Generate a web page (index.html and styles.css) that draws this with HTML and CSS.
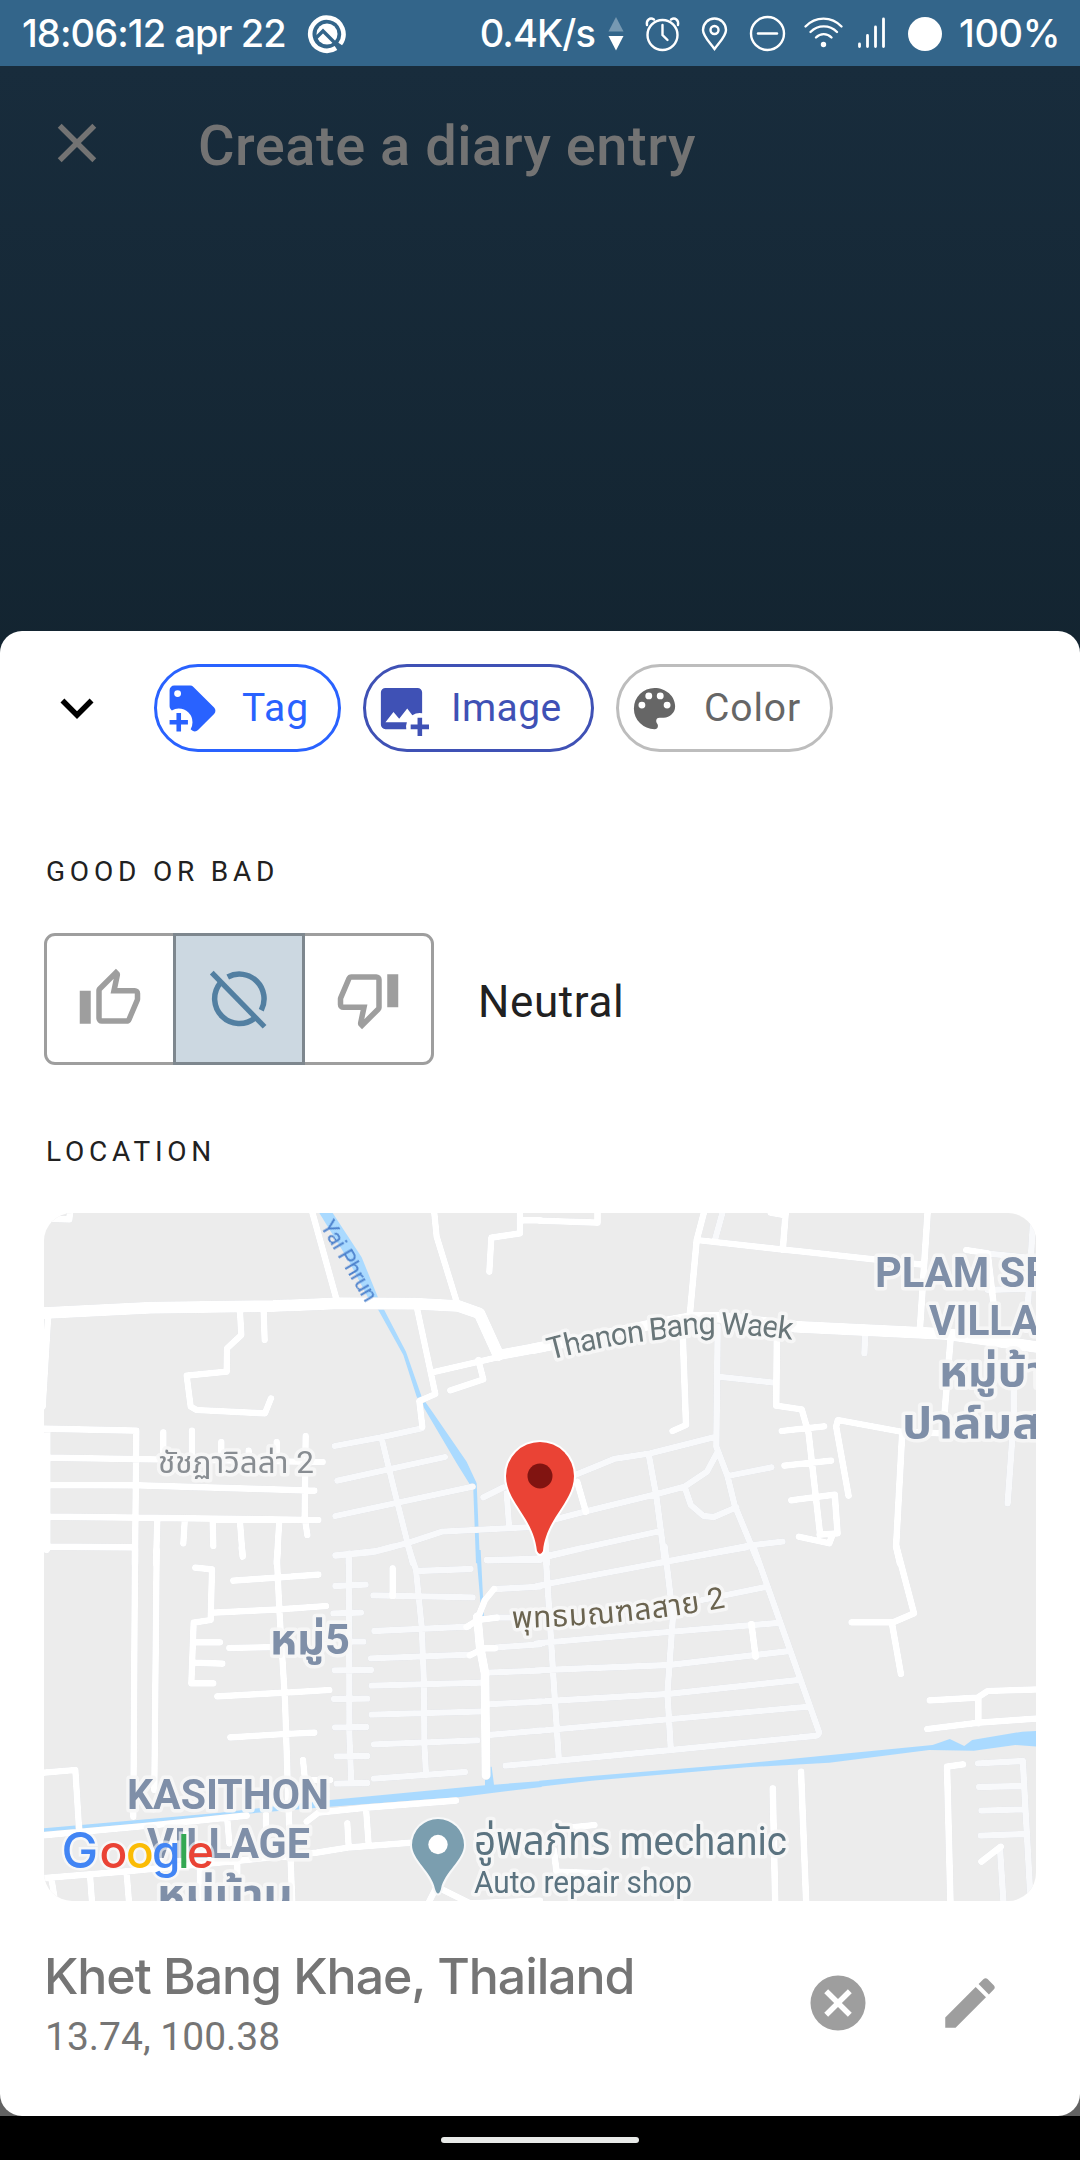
FILE: index.html
```html
<!DOCTYPE html>
<html lang="en">
<head>
<meta charset="utf-8">
<title>Create a diary entry</title>
<link rel="stylesheet" href="styles.css">
</head>
<body>
<div class="screen">
  <div class="statusbar">
    <span class="clock">18:06:12 apr 22</span>
    <svg class="notif" width="40" height="40" viewBox="0 0 40 40" fill="none"><path d="M29 34A16.600 16.600 0 1 1 33.200 30" stroke="#fff" stroke-width="4.600"/><circle cx="20" cy="20" r="10.500" fill="#fff"/><path d="M8 25l8-8 14 14" stroke="#33658a" stroke-width="3.400"/></svg>
    <span class="rate">0.4K/s</span>
    <svg class="sysicons" width="344" height="44" viewBox="604 11 344 44" fill="none" stroke="#fff" stroke-width="2.400" stroke-linecap="round">
      <path d="M617 16l7.500 14.500h-15z" fill="#7799b2" stroke="none"/>
      <path d="M617 49.500l7.500-14.500h-15z" fill="#fff" stroke="none"/>
      <circle cx="663.500" cy="34" r="15"/><path d="M663.500 24v10l5 5M648 24c-1-5 3-8 7-5.500M679 24c1-5-3-8-7-5.500"/>
      <path d="M715.500 48c-6-8-11.500-13-11.500-19a11.500 11.500 0 0 1 23 0c0 6-5.500 11-11.500 19z"/><circle cx="715.500" cy="29" r="4"/>
      <circle cx="768.500" cy="32.500" r="16.500"/><path d="M759 32.500h19"/>
      <path d="M806.500 25.500c10-10.500 26-10.500 36 0M811.500 31c7.500-7.500 19-7.500 26.500 0M817 36.500c4.500-4.500 11-4.500 15.500 0"/><circle cx="824.500" cy="43.500" r="1.500" fill="#fff"/>
      <path d="M860.500 43v2.500M868.500 34.500v11M876.500 26v19.500M884.500 18v27.500" stroke-width="2.800"/>
      <circle cx="926" cy="33" r="17" fill="#fff" stroke="none"/>
    </svg>
    <span class="battery">100%</span>
  </div>

  <div class="backdrop">
    <header class="header">
      <svg class="icon close" viewBox="0 0 24 24"><path d="M19 6.410 17.590 5 12 10.590 6.410 5 5 6.410 10.590 12 5 17.590 6.410 19 12 13.410 17.590 19 19 17.590 13.410 12z"/></svg>
      <h1 class="title">Create a diary entry</h1>
    </header>

    <main class="sheet">
      <div class="toolbar">
        <svg class="icon chevron" viewBox="0 0 24 24"><path d="M7.410 8.580 12 13.170l4.590-4.590L18 10l-6 6-6-6z"/></svg>
        <div class="chips">
          <div class="chip chip-tag"><svg viewBox="0 0 24 24"><path d="M21.410 11.580l-9-9A2 2 0 0 0 11 2H4a2 2 0 0 0-2 2v7a2 2 0 0 0 .590 1.420l.410.400A5.620 5.620 0 0 1 6 12a6 6 0 0 1 6 6 5.620 5.620 0 0 1-.820 3l.400.400A2 2 0 0 0 13 22a2 2 0 0 0 1.410-.590l7-7A2 2 0 0 0 22 13a2 2 0 0 0-.590-1.420M5.500 7A1.500 1.500 0 1 1 7 5.500 1.500 1.500 0 0 1 5.500 7M10 19H7v3H5v-3H2v-2h3v-3h2v3h3z"/></svg><span>Tag</span></div>
          <div class="chip chip-image"><svg viewBox="0 0 24 24"><path d="M5 3a2 2 0 0 0-2 2v14a2 2 0 0 0 2 2h9.090A6 6 0 0 1 14.350 18H5l3.500-4.500 2.500 3 3.500-4.500 2.230 2.970A6 6 0 0 1 21 14.090V5a2 2 0 0 0-2-2zM19 16v3h-3v2h3v3h2v-3h3v-2h-3v-3z"/></svg><span>Image</span></div>
          <div class="chip chip-color"><svg viewBox="0 0 24 24"><path d="M17.500 12A1.500 1.500 0 0 1 16 10.500 1.500 1.500 0 0 1 17.500 9a1.500 1.500 0 0 1 1.500 1.500 1.500 1.500 0 0 1-1.500 1.500m-3-4A1.500 1.500 0 0 1 13 6.500 1.500 1.500 0 0 1 14.500 5 1.500 1.500 0 0 1 16 6.500 1.500 1.500 0 0 1 14.500 8m-5 0A1.500 1.500 0 0 1 8 6.500 1.500 1.500 0 0 1 9.500 5 1.500 1.500 0 0 1 11 6.500 1.500 1.500 0 0 1 9.500 8m-3 4A1.500 1.500 0 0 1 5 10.500 1.500 1.500 0 0 1 6.500 9 1.500 1.500 0 0 1 8 10.500 1.500 1.500 0 0 1 6.500 12M12 3a9 9 0 0 0 0 18 1.500 1.500 0 0 0 1.500-1.500c0-.390-.150-.740-.390-1-.230-.270-.380-.620-.380-1a1.500 1.500 0 0 1 1.500-1.500H16a5 5 0 0 0 5-5c0-4.420-4.030-8-9-8z"/></svg><span>Color</span></div>
        </div>
      </div>

      <h2 class="label">GOOD OR BAD</h2>
      <div class="mood">
        <div class="segments">
          <div class="segment"><svg class="icon" viewBox="0 0 24 24"><path d="M5 9v12H1V9h4m4 12a2 2 0 0 1-2-2V9c0-.550.220-1.050.590-1.410L14.170 1l1.060 1.060c.270.270.440.640.440 1.050l-.030.320L14.690 8H21a2 2 0 0 1 2 2v2c0 .260-.050.500-.140.730l-3.020 7.050A2 2 0 0 1 18 21H9m0-2h9.030L21 12v-2h-8.790l1.130-5.320L9 9.030z"/></svg></div>
          <div class="segment selected"><svg class="icon" viewBox="0 0 24 24" fill="none" stroke="currentColor" stroke-width="2"><path d="M2.100 2.400 21.300 22.100" stroke-width="1.900"/><path d="M7.900 4A9 9 0 0 1 20.100 16.100M5.100 6.300A9 9 0 0 0 17.800 18.900"/></svg></div>
          <div class="segment"><svg class="icon flipped" viewBox="0 0 24 24"><path d="M5 9v12H1V9h4m4 12a2 2 0 0 1-2-2V9c0-.550.220-1.050.590-1.410L14.170 1l1.060 1.060c.270.270.440.640.440 1.050l-.030.320L14.690 8H21a2 2 0 0 1 2 2v2c0 .260-.050.500-.140.730l-3.020 7.050A2 2 0 0 1 18 21H9m0-2h9.030L21 12v-2h-8.790l1.130-5.320L9 9.030z"/></svg></div>
        </div>
        <span class="mood-name">Neutral</span>
      </div>

      <h2 class="label label-location">LOCATION</h2>
      <svg class="map" width="992" height="688" viewBox="0 0 992 688">
        <defs>
          <path id="bangwaek" d="M506 147Q562 132 616 126.500Q650 119 681 121.500Q715 122 753 127.500"/>
          <path id="phuttha" d="M468 415Q580 413 684 394"/>
        </defs>
        <!-- The map is made of four tiles drawn at three times their size -->
        <g class="water">
          <path transform="translate(-4 -13) scale(.33333)" d="M838 39H878L965 172 1015 295H985L925 180zM1012 325H1030L1098 455 1145 590 1180 640 1280 785 1310 850 1320 1090H1308L1300 870 1250 790 1150 620 1130 590 1090 465z"/>
          <path transform="translate(-4 337) scale(.33333)" d="M1308 0H1322L1332 200H1325zM1335 706V650H1355L1362 704 1505 693V711L1362 728 1255 742 870 770 540 798 12 848V835L540 788 870 750z"/>
          <path transform="translate(496 337) scale(.34437 .33333)" d="M-2 692 150 678 600 640 1140 585 1190 567 1232 588 1255 570 1400 545 1442 543V590L1380 585 1260 602 1130 600 840 638 600 652 150 692-2 710z"/>
        </g>
        <g class="streets">
          <g transform="translate(-4 -13) scale(.33333)">
            <path class="lane" d="M884 738 1022 712 1145 685M892 842 1215 771M886 948 1298 860M888 1067 1010 1053 1110 1027 1205 995 1500 980M1024 712 1065 880 1118 1090M926 1065V1090M1330 892 1390 862M1400 880 1407 975M1340 1080H1500"/>
            <path class="road" d="M815 30 890 300M1182 30 1190 110 1250 305M1440 30V100L1354 113 1348 215M1440 61H1500M12 55 88 58 90 38M1130 320 1186 582 1138 603 1147 680M1182 516 1380 470M1315 480 1330 538 1231 571M600 335 604 405 561 445 560 515 440 527 452 620 470 630 675 640 693 595M671 335 674 420M24 355 8 620M12 686 289 692 285 1090M22 690V1040M20 773 460 780 848 786M20 855 300 856 823 872M20 950 285 953 835 960M370 697V770M456 692V770M544 726V780M626 752V780M710 726V780M797 708 794 950 802 1005M20 1040 285 1042M20 1040 0 1055M352 955 348 1090M434 965 430 1030M518 965 520 1038M600 965 608 1070M718 960 710 1090"/>
            <path class="main" d="M0 340 330 323 700 318 900 310 1130 311 1255 318 1318 340 1375 465"/>
            <path class="main second" d="M1375 465 1510 440"/>
          </g>
          <g transform="translate(496 -13) scale(.34437 .33333)">
            <path class="lane" d="M532 30 508 120M1434 30 1412 390M1295 160 1440 175M1300 270 1440 265M516 380 512 740 545 830 565 915 635 1090M516 530 680 548M944 410 942 460M1375 440 1376 650 1358 910M90 830 215 777 320 760 512 710M0 970 130 935 335 883 420 860 485 815 516 755M316 765 338 890 362 1080M420 860 438 915 475 948 505 951 570 922M545 828 672 802M0 1072 350 993M340 1090 610 1036 704 1025M14 990 20 1090"/>
            <path class="road" d="M0 62 167 68V30M478 30 455 120 435 345M455 120 700 148 1110 194M670 38 712 46M714 30 705 150M1126 30 1103 390M1238 150 1300 160 1318 320M414 390 424 675 385 693M688 390 686 617 760 628 780 700 813 1000M702 693 825 679M710 797 845 782M730 901 856 884 864 1000 812 1004M752 1010 840 1030 848 1008M896 887 860 680 865 660 1050 695 1170 700M1192 420 1170 700M1052 695 1034 1040 1045 1090M108 845 133 935"/>
            <path class="main second" d="M-20 446 160 410 330 372 440 352 520 352 610 362"/>
            <path class="main" d="M600 362 740 380 1000 393 1180 402 1450 442"/>
          </g>
          <g transform="translate(-4 337) scale(.33333)">
            <path class="lane" d="M886 16 1000 6 1060-10M927 10 928 550 934 700M1105-10 1128 60 1145 230 1152 400 1153 580 1158 670M1130 63 1292 57M886 108 977 104M880 190 963 188M927 275 970 275M884 361 993 360M882 447 982 446M885 532 979 531M890 619 982 618M890 701 982 699M1000 136 1298 142M1003 243 1285 230M993 325 1290 314M995 407 1335 398M995 494 1335 484M1002 583 1312 571M1002 686 1275 666M1345 31 1500 25M1370 117 1500 110M1372 203H1440M1370 292 1500 283M1340 368 1500 362M1340 463 1500 455M1345 555 1500 542M1397 647 1500 638"/>
            <path class="road" d="M285 0 280 800M350 0 343 720M20 0 12-5M605-5 608 15M714 0 711 30 718 180 735 450 745 760 757 1060M466 53 516 58 512 210 461 218 454 400 520 400M580 92 720 82 835 74M520 188 720 178 858 168M461 277H540M461 338 547 341M568 294 710 291M532 439 735 428 868 420M571 562 735 552 823 548M789 630 795 690 870 690M1058 55V138M1280 231 1310 212 1335 150 1362 117M1315 210 1370 203M1290 316 1330 295H1365M12 668 106 660 117 835M0 857 350 825 620 797M800 815 835 788 980 773 1248 752M978 775 986 885M922 820 926 890M562 810 568 880M678 795V830M0 985 250 965 600 932 830 908 930 892 1115 878M35 990 48 1070M150 975 157 1070M260 970 268 1070M480 950V1060M592 945V1060M1165 1060 1190 1010 1290 1060 1500 1052"/>
            <path class="road wide" d="M1312 200 1320 290 1335 370 1338 676"/>
          </g>
          <g transform="translate(496 337) scale(.34437 .33333)">
            <path class="lane" d="M620-10 810 545Q812 558 795 558L380 600-10 638M15-10 40 400 55 632M362-10 386 200 370 430 380 600M0 25 120-5M-10 108 360 36 600-8M470 150 660 110M-10 280 385 245 690 219M-10 361 375 345 725 303M-10 455 370 432 750 390M-10 543 370 508 780 470M1272 640 1402 633 1425 1060M1275 711 1400 708M1282 782 1405 778M1280 857 1410 852M1336 900 1346 1060"/>
            <path class="road" d="M614 222 626 320M1035-10 1086 190 1025 217 905 217M1022 220 1048 372M1132 451 1270 443 1300 423 1450 418M1273 445V520M1125 537 1275 518 1450 505M676 715 683 1060M758 665 773 1060M1228 643 1182 650 1192 1060M1282 935 1338 890M85 833 158 825M40 900 48 965 180 970"/>
          </g>
        </g>

        <g class="labels">
          <text class="river" transform="translate(276 13) rotate(59.500)" textLength="90">Yai Phrun</text>
          <text class="minor" x="114" y="260" textLength="156" lengthAdjust="spacingAndGlyphs">ชัชฏาวิลล่า 2</text>
          <text class="street"><textPath href="#bangwaek" textLength="245">Thanon Bang Waek</textPath></text>
          <text class="soi"><textPath href="#phuttha" textLength="215">พุทธมณฑลสาย 2</textPath></text>
          <g class="area">
            <text x="831" y="74" textLength="177" lengthAdjust="spacingAndGlyphs">PLAM SP</text>
            <text x="885" y="122" textLength="110" lengthAdjust="spacingAndGlyphs">VILLA</text>
            <text x="895" y="173" textLength="108" lengthAdjust="spacingAndGlyphs">หมู่บ้า</text>
            <text x="858" y="225" textLength="139" lengthAdjust="spacingAndGlyphs">ปาล์มส</text>
            <text x="226" y="441" textLength="80" lengthAdjust="spacingAndGlyphs">หมู่5</text>
            <text x="83" y="596" textLength="202" lengthAdjust="spacingAndGlyphs">KASITHON</text>
            <text x="103" y="645" textLength="163" lengthAdjust="spacingAndGlyphs">VILLAGE</text>
            <text x="113" y="696" textLength="136" lengthAdjust="spacingAndGlyphs">หมู่บ้าน</text>
          </g>
          <text class="place" x="430" y="642" textLength="313" lengthAdjust="spacingAndGlyphs">อู่พลภัทร mechanic</text>
          <text class="place-kind" x="430" y="680" textLength="218" lengthAdjust="spacingAndGlyphs">Auto repair shop</text>
        </g>

        <path d="M394 606a26 26 0 0 1 26 26c0 15-20 27-23 44q-3 9-6 0c-3-17-23-29-23-44a26 26 0 0 1 26-26z" fill="#7b9eaf" stroke="#f7f8f9" stroke-width="4" paint-order="stroke"/>
        <circle cx="394" cy="631.500" r="9.700" fill="#fff"/>

        <path d="M496 229a34 34 0 0 1 34 34c0 26-28 42-31 75q-3 6-6 0c-3-33-31-49-31-75a34 34 0 0 1 34-34z" fill="#ea4335" stroke="#fff" stroke-width="4" paint-order="stroke"/>
        <circle cx="496" cy="263" r="12.500" fill="#811411"/>

        <text class="google" y="655"><tspan class="google-g" x="17.500" fill="#4285f4">G</tspan><tspan x="55.500" fill="#ea4335">o</tspan><tspan x="82" fill="#fbbc05">o</tspan><tspan x="108" fill="#4285f4">g</tspan><tspan x="134" fill="#34a853">l</tspan><tspan x="143" fill="#ea4335">e</tspan></text>
      </svg>

      <div class="place-row">
        <div class="place-info">
          <div class="place-name">Khet Bang Khae, Thailand</div>
          <div class="coords">13.74, 100.38</div>
        </div>
        <div class="actions">
          <svg class="icon" viewBox="0 0 24 24"><path d="M12 2a10 10 0 1 0 0 20 10 10 0 0 0 0-20m3.590 5L17 8.410 13.410 12 17 15.590 15.590 17 12 13.410 8.410 17 7 15.590 10.590 12 7 8.410 8.410 7 12 10.590z"/></svg>
          <svg class="icon" viewBox="0 0 24 24"><path d="M20.710 7.040c.390-.390.390-1.040 0-1.410l-2.340-2.340c-.370-.390-1.020-.390-1.410 0l-1.840 1.830 3.750 3.750M3 17.250V21h3.750L17.810 9.930l-3.750-3.750z"/></svg>
        </div>
      </div>
    </main>
  </div>
  <div class="navbar"><div class="handle"></div></div>
</div>
</body>
</html>
```

FILE: styles.css
```css
* { box-sizing: border-box; }
body {
  margin: 0;
  font-family: Roboto, "Noto Sans", sans-serif;
  background: #000;
}
.screen {
  width: 1080px;
  height: 2160px;
  display: flex;
  flex-direction: column;
  overflow: hidden;
}
h1, h2 { margin: 0; }
.icon { width: 66px; height: 66px; display: block; flex: none; fill: currentColor; }
.icon[fill="none"] { fill: none; }

/* Status bar */
.statusbar {
  height: 66px;
  flex: none;
  display: flex;
  align-items: center;
  padding: 1px 20px 0 22px;
  background: #33658a;
  color: #fff;
  font: 500 38px/65px Inter, "Open Sans", sans-serif;
  white-space: nowrap;
}
.clock { width: 264px; letter-spacing: -0.9px; }
.notif { margin-left: 21px; flex: none; }
.rate { margin-left: 133px; width: 124px; letter-spacing: -0.9px; }
.sysicons { flex: none; }
.battery { margin-left: 12px; letter-spacing: -0.4px; }

/* Dimmed page behind the sheet */
.backdrop {
  height: 2050px;
  flex: none;
  background: linear-gradient(#182c3c 0, #132430 620px, #132430 1200px, #626262 1200px);
}
.header {
  height: 565px;
  display: flex;
  align-items: flex-start;
  gap: 88px;
  padding: 44px 44px 0;
  color: #737373;
}
.title { margin-top: 4px; font-size: 56px; line-height: 64px; font-weight: 500; letter-spacing: 0.5px; }

/* Sheet */
.sheet {
  height: 1485px;
  padding: 33px 44px 0;
  border-radius: 22px;
  background: #fff;
}
.toolbar { display: flex; align-items: center; gap: 44px; }
.chevron { color: #000; }
.chips { display: flex; gap: 22px; }
.chip {
  height: 88px;
  display: flex;
  align-items: center;
  gap: 22px;
  padding: 0 0 0 8px;
  border: 3px solid;
  border-radius: 44px;
  font-size: 39px;
  letter-spacing: 0.9px;
}
.chip svg { width: 55px; height: 55px; flex: none; fill: currentColor; }
.chip-tag { width: 187px; color: #2962ff; }
.chip-image { width: 231px; color: #3f51b5; letter-spacing: 0.4px; }
.chip-color { width: 217px; color: #666; border-color: #bdbdbd; }

.label {
  margin: 100px 0 41px 2px;
  font-size: 28px;
  line-height: 40px;
  font-weight: 400;
  letter-spacing: 4.8px;
  color: #212121;
}
.label-location { margin-top: 67px; }

.mood { display: flex; align-items: center; gap: 44px; }
.segments { display: flex; width: 390px; }
.segment {
  width: 132px;
  height: 132px;
  display: flex;
  align-items: center;
  justify-content: center;
  border: 3px solid #9e9e9e;
  color: #9e9e9e;
}
.segment + .segment { margin-left: -3px; }
.segment:first-child { border-radius: 11px 0 0 11px; }
.segment:last-child { border-radius: 0 11px 11px 0; }
.segment.selected { z-index: 1; background: #ccd8e1; border-color: #7e878e; color: #527fa1; }
.flipped { transform: rotate(180deg); }
.mood-name { font-size: 44px; line-height: 52px; letter-spacing: 0.6px; color: #212121; margin-top: 6px; }

/* Map */
.map { display: block; border-radius: 28px; background: #ececec; }
.water { fill: #aadaff; }
.streets {
  fill: none;
  stroke-linecap: round;
  stroke-linejoin: round;
  filter: drop-shadow(0 0.8px 0.5px #cfd2d8);
}
.lane { stroke: #f8f9fb; stroke-width: 19; }
.road { stroke: #fff; stroke-width: 20; }
.wide { stroke-width: 27; }
.main { stroke: #fff; stroke-width: 36; }
.second { stroke-width: 32; }
.labels text {
  font-family: Roboto, "Noto Sans Thai", "Noto Sans", sans-serif;
  paint-order: stroke;
  stroke: #f7f7f7;
  stroke-opacity: 0.9;
  stroke-width: 7px;
  stroke-linejoin: round;
}
.labels .river { font-size: 22px; fill: #4b80cc; stroke: none; }
.labels .minor { font-size: 31px; fill: #888d92; }
.labels .street { font-size: 31px; fill: #697679; }
.labels .soi { font-size: 30px; fill: #6b6450; }
.labels .area text { font-size: 43px; font-weight: 700; fill: #7f8fa8; }
.labels .place { font-size: 41px; fill: #5b7380; }
.labels .place-kind { font-size: 31px; fill: #5b7380; }
.google {
  font: 500 46px Inter, sans-serif;
  paint-order: stroke;
  stroke: #fff;
  stroke-opacity: 0.6;
  stroke-width: 5px;
}
.google-g { font-size: 49px; }

/* Selected place */
.place-row {
  display: flex;
  align-items: flex-start;
  justify-content: space-between;
  padding: 44px 0 0;
}
.place-info { color: #757575; white-space: nowrap; }
.place-name { font: 500 50px/62px Inter, "Open Sans", sans-serif; letter-spacing: -1.05px; }
.coords { margin: 6px 0 0 1px; font-size: 39px; line-height: 48px; letter-spacing: 0; }
.actions { display: flex; gap: 66px; margin: 25px 33px 0 0; color: #9e9e9e; }

/* Gesture navigation */
.navbar {
  height: 44px;
  flex: none;
  display: flex;
  align-items: center;
  justify-content: center;
  background: #000;
  padding-top: 4px;
}
.handle { width: 198px; height: 6px; border-radius: 3px; background: #e8eae8; }
```
